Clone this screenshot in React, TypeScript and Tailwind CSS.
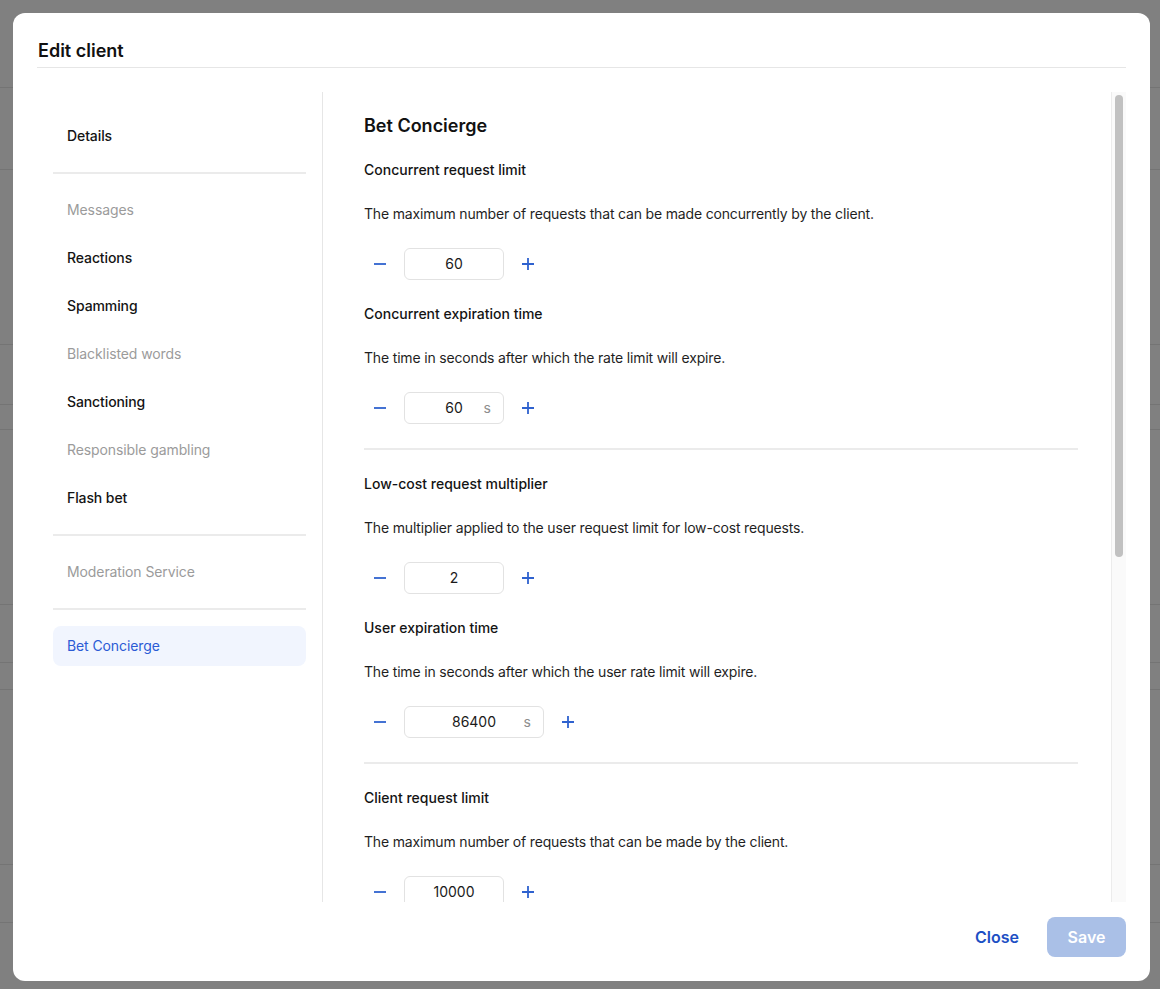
import React from "react";

const FONT = { fontFamily: "Inter, 'Noto Sans', 'Liberation Sans', sans-serif" };

function MinusIcon() {
  return (
    <svg width="14" height="14" viewBox="0 0 14 14" aria-hidden>
      <path d="M1 7h12" stroke="#2f62cf" strokeWidth="1.8" />
    </svg>
  );
}

function PlusIcon() {
  return (
    <svg width="14" height="14" viewBox="0 0 14 14" aria-hidden>
      <path d="M1 7h12M7 1v12" stroke="#2f62cf" strokeWidth="1.8" />
    </svg>
  );
}

function Stepper({ value, suffix, wide }: { value: string; suffix?: string; wide?: boolean }) {
  return (
    <div className="flex items-center gap-2">
      <button className="w-8 h-8 flex items-center justify-center">
        <MinusIcon />
      </button>
      <div
        className={`relative h-8 ${wide ? "w-[140px]" : "w-[100px]"} rounded-md border border-[#e2e2e2] bg-white flex items-center justify-center text-sm text-[#1a1a1a]`}
      >
        <span>{value}</span>
        {suffix && (
          <span className="absolute right-[12px] top-1/2 -translate-y-1/2 text-sm text-[#8d8d8d]">{suffix}</span>
        )}
      </div>
      <button className="w-8 h-8 flex items-center justify-center">
        <PlusIcon />
      </button>
    </div>
  );
}

function Field({ label, desc, value, suffix, wide }: { label: string; desc: string; value: string; suffix?: string; wide?: boolean }) {
  return (
    <>
      <div className="text-sm font-[480] leading-5 text-[#141414]">{label}</div>
      <div className="text-sm leading-5 text-[#1f1f1f] tracking-[-0.17px]">{desc}</div>
      <Stepper value={value} suffix={suffix} wide={wide} />
    </>
  );
}

function SideItem({ label, state }: { label: string; state: "on" | "off" | "active" }) {
  const cls =
    state === "active"
      ? "bg-[#f1f5fe] text-[#2b5bd5]"
      : state === "off"
      ? "text-[#9b9b9b]"
      : "text-[#141414] font-[460]";
  return <div className={`h-10 rounded-lg px-3.5 flex items-center text-sm tracking-[-0.1px] ${cls}`}>{label}</div>;
}

function SideDivider() {
  return <div className="h-[2px] bg-[#ebebeb] my-4" />;
}

function BgLine({ h }: { h: number }) {
  return <div className="border-b border-[#747474]" style={{ height: h }} />;
}

export default function App() {
  return (
    <div className="relative w-full h-[989px] overflow-hidden bg-[#808080]" style={FONT}>
      {/* dimmed page behind */}
      <div className="flex flex-col">
        <BgLine h={88} />
        <BgLine h={82} />
        <BgLine h={175} />
        <BgLine h={60} />
        <BgLine h={25} />
        <BgLine h={175} />
        <BgLine h={58} />
        <BgLine h={27} />
        <BgLine h={175} />
        <BgLine h={58} />
        <div className="h-[48px] flex items-center text-[16px] text-[#222]">
          <div className="w-[208px]" />
          <span className="w-[8px] h-[8px] rounded-full bg-[#0b6b1e] mr-[8px]" />
          <span className="w-[380px]">Jasa Client</span>
          <span className="w-[8px] h-[8px] rounded-full bg-[#0b6b1e] mr-[8px]" />
          <span className="w-[370px]">Klient-Ema</span>
          <span className="w-[8px] h-[8px] rounded-full bg-[#0b6b1e] mr-[8px]" />
          <span>Klient1</span>
        </div>
      </div>

      {/* modal */}
      <div className="absolute left-[13px] top-[13px] w-[1137px] h-[968px] bg-white rounded-xl flex flex-col overflow-hidden">
        <div className="mx-6 pt-6 pb-0.5 border-b border-[#e6e6e6]">
          <h2 className="text-[18px] leading-7 font-semibold text-[#111] pl-px">Edit client</h2>
        </div>

        <div className="mx-6 pt-6 flex h-[834px]">
          <div className="w-[286px] shrink-0 pl-4 pr-4 pt-6 border-r border-[#e6e6e6] h-[810px]">
            <SideItem label="Details" state="on" />
            <SideDivider />
            <div className="flex flex-col gap-2">
              <SideItem label="Messages" state="off" />
              <SideItem label="Reactions" state="on" />
              <SideItem label="Spamming" state="on" />
              <SideItem label="Blacklisted words" state="off" />
              <SideItem label="Sanctioning" state="on" />
              <SideItem label="Responsible gambling" state="off" />
              <SideItem label="Flash bet" state="on" />
            </div>
            <SideDivider />
            <SideItem label="Moderation Service" state="off" />
            <SideDivider />
            <SideItem label="Bet Concierge" state="active" />
          </div>

          <div className="flex-1 flex h-[810px]">
            <div className="flex-1 overflow-hidden pl-[41px] pr-[33px] pt-5">
              <div className="flex flex-col gap-6">
                <h3 className="text-[18px] leading-7 font-semibold text-[#111] -mb-1">Bet Concierge</h3>
                <Field
                  label="Concurrent request limit"
                  desc="The maximum number of requests that can be made concurrently by the client."
                  value="60"
                />
                <Field
                  label="Concurrent expiration time"
                  desc="The time in seconds after which the rate limit will expire."
                  value="60"
                  suffix="s"
                />
                <div className="h-[2px] bg-[#ebebeb]" />
                <Field
                  label="Low-cost request multiplier"
                  desc="The multiplier applied to the user request limit for low-cost requests."
                  value="2"
                />
                <Field
                  label="User expiration time"
                  desc="The time in seconds after which the user rate limit will expire."
                  value="86400"
                  suffix="s"
                  wide
                />
                <div className="h-[2px] bg-[#ebebeb]" />
                <Field
                  label="Client request limit"
                  desc="The maximum number of requests that can be made by the client."
                  value="10000"
                />
                <Field
                  label="Client expiration time"
                  desc="The time in seconds after which the client rate limit will expire."
                  value="60"
                  suffix="s"
                />
              </div>
            </div>
            <div className="w-[15px] shrink-0 border-l border-[#ececec] bg-[#fafafa] pt-[3px] px-[3px]">
              <div className="h-[462px] rounded-full bg-[#c1c1c1]" />
            </div>
          </div>
        </div>

        <div className="flex items-center justify-end gap-3 px-6 pt-[15px] pb-6">
          <button className="h-10 px-4 text-[16px] font-semibold text-[#1d4fc4]">Close</button>
          <button className="h-10 w-[79px] rounded-lg bg-[#aac0e7] text-[16px] font-semibold text-white">Save</button>
        </div>
      </div>
    </div>
  );
}
